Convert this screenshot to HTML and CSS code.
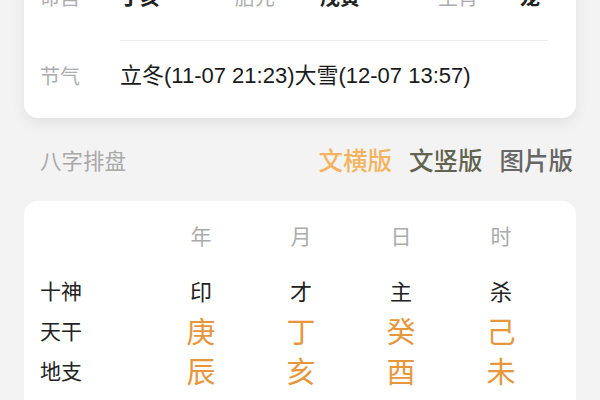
FILE: index.html
```html
<!DOCTYPE html>
<html lang="zh">
<head>
<meta charset="utf-8">
<link rel="stylesheet" href="styles.css">
</head>
<body>
<div class="page">
  <section class="card info">
    <div class="row">
      <div class="label">命宫</div>
      <div class="content top">
        <span class="val w1">丁亥</span>
        <span class="lab w2">胎元</span>
        <span class="val w3">戊寅</span>
        <span class="lab w4">生肖</span>
        <span class="val">龙</span>
      </div>
    </div>
    <div class="row">
      <div class="label">节气</div>
      <div class="content jq">立冬(11-07 21:23)大雪(12-07 13:57)</div>
    </div>
  </section>

  <div class="section-head">
    <div class="title">八字排盘</div>
    <div class="tabs">
      <span class="tab active">文横版</span>
      <span class="tab olive">文竖版</span>
      <span class="tab gray">图片版</span>
    </div>
  </div>

  <section class="card bazi">
    <div class="grid">
      <div class="head"></div>
      <div class="head c">年</div>
      <div class="head c">月</div>
      <div class="head c">日</div>
      <div class="head c">时</div>

      <div class="rlabel">十神</div>
      <div class="god c">印</div>
      <div class="god c">才</div>
      <div class="god c">主</div>
      <div class="god c">杀</div>

      <div class="rlabel">天干</div>
      <div class="gz c">庚</div>
      <div class="gz c">丁</div>
      <div class="gz c">癸</div>
      <div class="gz c">己</div>

      <div class="rlabel">地支</div>
      <div class="gz c">辰</div>
      <div class="gz c">亥</div>
      <div class="gz c">酉</div>
      <div class="gz c">未</div>
    </div>
  </section>
</div>
</body>
</html>
```

FILE: styles.css
```css
* { box-sizing: border-box; }
html {
  overflow: hidden;
}
html, body {
  margin: 0;
  padding: 0;
  background: #f3f3f3;
  font-family: "Noto Sans CJK SC", "Noto Sans", sans-serif;
}
.page {
  width: 600px;
  padding: 0 24px;
}
.card {
  background: #fff;
  border-radius: 14px;
}
.info {
  margin-top: -60px;
  padding: 0 28px 0 16px;
  box-shadow: 0 6px 14px rgba(0, 0, 0, 0.07);
}
.row {
  display: flex;
}
.label {
  width: 80px;
  flex: none;
  color: #acacac;
  font-size: 20px;
  line-height: 26px;
}
.row:first-child .label {
  padding-top: 44px;
}
.row:last-child .label {
  padding-top: 22px;
}
.content {
  flex: 1;
  font-size: 20px;
  line-height: 26px;
  color: #1e1e1e;
}
.content.top {
  display: flex;
  padding: 44px 0 30px;
  border-bottom: 1px solid #ececec;
}
.content .val { font-weight: 700; color: #222; }
.content .lab { color: #acacac; }
.w1 { width: 115px; }
.w2 { width: 85px; }
.w3 { width: 118px; }
.w4 { width: 82px; }
.content.jq {
  padding: 22px 0 29px;
  font-family: "Liberation Sans", "Noto Sans CJK SC", sans-serif;
  font-size: 22px;
  color: #1a1a1a;
}
.section-head {
  display: flex;
  justify-content: space-between;
  align-items: center;
  height: 83px;
  padding: 0 3px 0 16px;
}
.title {
  font-size: 21.5px;
  color: #a9a9a9;
}
.tabs {
  display: flex;
  gap: 17px;
}
.tab {
  font-size: 24.5px;
  font-weight: 500;
  line-height: 30px;
}
.tab.active { color: #f3b461; }
.tab.olive { color: #62634f; }
.tab.gray { color: #666; }
.bazi {
  padding: 14px 16px 20px;
  height: 240px;
}
.grid {
  display: grid;
  grid-template-columns: 111px repeat(4, 100px);
  grid-template-rows: 55px 40px 40px 40px;
  align-items: center;
}
.c { text-align: center; }
.head {
  font-size: 21px;
  color: #ababab;
  height: 40px;
  line-height: 40px;
  align-self: start;
}
.rlabel {
  font-size: 21px;
  color: #222;
}
.god {
  font-size: 22px;
  color: #222;
}
.gz {
  font-size: 29px;
  color: #e6973c;
  line-height: 40px;
}
```
